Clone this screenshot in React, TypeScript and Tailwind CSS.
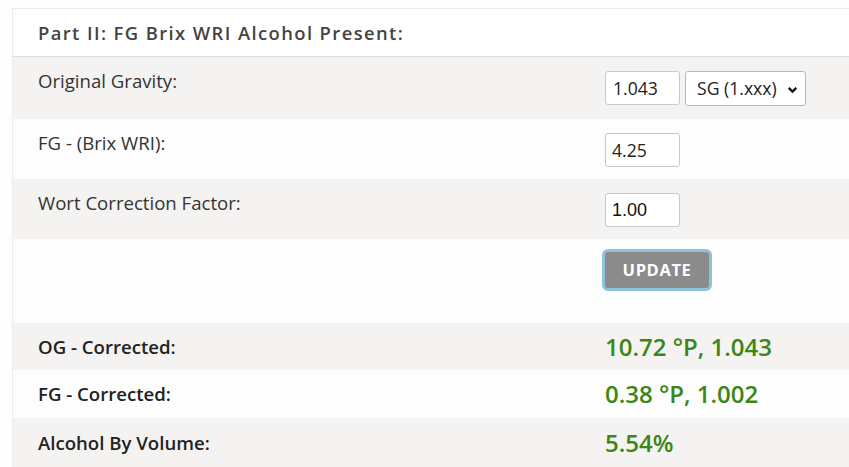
import React from "react";

const font = { fontFamily: '"Open Sans", Arial, sans-serif' };

const InputRow: React.FC<{ label: string; shade: boolean; children: React.ReactNode; h: string }> = ({
  label,
  shade,
  children,
  h,
}) => {
  return (
    <div className={`flex ${h} ${shade ? "bg-[#f4f3f1]" : "bg-[#fdfdfd]"}`}>
      <div className="w-[592px] shrink-0 pl-[25px] pt-[11px] text-[18.6px] leading-[26px] text-[#333]">{label}</div>
      <div className="flex gap-[5px] pt-[14px]">{children}</div>
    </div>
  );
};

const ResultRow: React.FC<{ label: string; value: string; shade: boolean; h: string }> = ({ label, value, shade, h }) => {
  return (
    <div className={`flex items-center ${h} ${shade ? "bg-[#f4f3f1]" : "bg-[#fdfdfd]"}`}>
      <div className="w-[592px] shrink-0 pl-[25px] text-[18.6px] font-semibold text-[#222]">{label}</div>
      <div className="text-[24px] font-semibold text-[#3b8716]">{value}</div>
    </div>
  );
};

export default function App() {
  return (
    <div className="h-[467px] w-[849px] overflow-hidden bg-[#fdfdfd] pl-[12px] pt-[8px]" style={font}>
      <div className="border-l border-t border-[#ececec]">
        <div className="flex h-[48px] items-center border-b border-[#dcdcdc] bg-white pl-[25px] text-[18.4px] font-semibold tracking-[1.4px] text-[#444]">
          Part II: FG Brix WRI Alcohol Present:
        </div>
        <InputRow label="Original Gravity:" shade h="h-[62px]">
          <input
            readOnly
            value="1.043"
            className="h-[34px] w-[75px] rounded-[3px] border border-[#c8c8c8] bg-white px-[7px] text-[17.6px] text-[#222]"
          />
          <div className="flex h-[35px] w-[121px] items-center justify-between rounded-[3px] border border-[#b8b8b8] bg-white pl-[11px] pr-[6px] text-[17.6px] text-[#222]">
            <span>SG (1.xxx)</span>
            <svg width="13" height="13" viewBox="0 0 12 12" className="mt-[1px]">
              <path d="M2.5 4.5 L6 8 L9.5 4.5" fill="none" stroke="#111" strokeWidth="2.2" />
            </svg>
          </div>
        </InputRow>
        <InputRow label="FG - (Brix WRI):" shade={false} h="h-[60px]">
          <input
            readOnly
            value="4.25"
            className="h-[34px] w-[75px] rounded-[3px] border border-[#c8c8c8] bg-white px-[6px] text-[17.6px] text-[#222]"
          />
        </InputRow>
        <InputRow label="Wort Correction Factor:" shade h="h-[60px]">
          <input
            readOnly
            value="1.00"
            style={{ fontFamily: '"Liberation Sans", Arial, sans-serif' }}
            className="h-[34px] w-[75px] rounded-[3px] border border-[#c8c8c8] bg-white px-[6px] text-[18px] text-[#111]"
          />
        </InputRow>
        <div className="flex h-[84px] bg-[#fdfdfd]">
          <div className="w-[589px] shrink-0" />
          <div className="pt-[10px]">
            <button className="h-[42px] w-[110px] rounded-[6px] border-[3px] border-[#8ec3e0] bg-[#8b8b8b] text-[16.5px] font-bold tracking-[0.6px] text-white">
              UPDATE
            </button>
          </div>
        </div>
        <ResultRow label="OG - Corrected:" value="10.72 °P, 1.043" shade h="h-[47px]" />
        <ResultRow label="FG - Corrected:" value="0.38 °P, 1.002" shade={false} h="h-[48px]" />
        <ResultRow label="Alcohol By Volume:" value="5.54%" shade h="h-[50px]" />
      </div>
    </div>
  );
}
